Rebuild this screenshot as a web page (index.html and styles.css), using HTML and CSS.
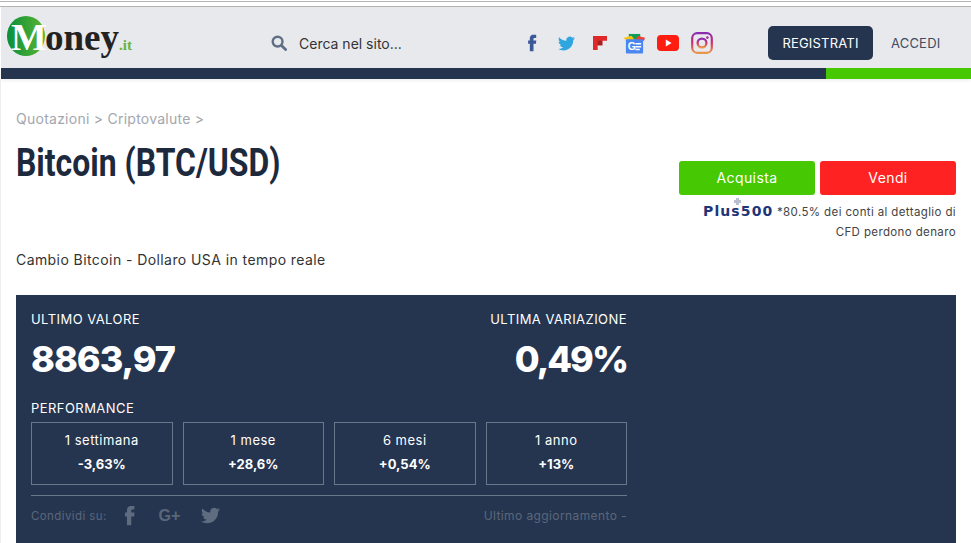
FILE: index.html
```html
<!DOCTYPE html>
<html lang="en">

<head>
    <meta charset="UTF-8">
    <title>Bitcoin (BTC/USD)</title>
    <link rel="stylesheet" href="styles.css">
</head>

<body>
    <div class="chrome"></div>
    <header class="site-header">
        <div class="logo">
            <span class="logo-circle"><span class="logo-m">M</span></span>
            <span class="logo-word">oney</span><span class="logo-tld">.it</span>
        </div>
        <div class="header-tools">
            <div class="search">
                <svg class="search-icon" viewBox="0 0 16 16" width="16" height="16">
                    <circle cx="6.6" cy="6.6" r="4.9" fill="none" stroke="#5f6f86" stroke-width="2.4"/>
                    <path d="M10.4 10.4L14.6 14.6" stroke="#5f6f86" stroke-width="2.8" stroke-linecap="round"/>
                </svg>
                <span>Cerca nel sito...</span>
            </div>
            <div class="socials">
                <div class="social"><svg viewBox="0 0 24 24" width="18" height="18"><path fill="#3b5998" d="M14 8.5V6.3c0-.9.6-1.1 1-1.1h2.6V1h-3.6C10 1 9.1 4 9.1 5.9v2.6H6.8V13h2.3v10h4.9V13h3.3l.4-4.5z"/></svg></div>
                <div class="social"><svg viewBox="0 0 24 24" width="17" height="17"><path fill="#2fa6e0" d="M23.953 4.57a10 10 0 01-2.825.775 4.958 4.958 0 002.163-2.723c-.951.555-2.005.959-3.127 1.184a4.92 4.92 0 00-8.384 4.482C7.69 8.095 4.067 6.13 1.64 3.162a4.822 4.822 0 00-.666 2.475c0 1.71.87 3.213 2.188 4.096a4.904 4.904 0 01-2.228-.616v.06a4.923 4.923 0 003.946 4.827 4.996 4.996 0 01-2.212.085 4.936 4.936 0 004.604 3.417 9.867 9.867 0 01-6.102 2.105c-.39 0-.779-.023-1.17-.067a13.995 13.995 0 007.557 2.209c9.053 0 13.998-7.496 13.998-13.985 0-.21 0-.42-.015-.63A9.935 9.935 0 0024 4.59z"/></svg></div>
                <div class="social"><svg viewBox="0 0 15 15" width="14" height="14"><path fill="#e12828" d="M0 0h15v5h-5v5H5v5H0z"/><path fill="#a51f1f" d="M5 5h5v5H5z"/></svg></div>
                <div class="social"><svg viewBox="0 0 22 22" width="21" height="21">
                    <path fill="#0c9d58" d="M5 1h12v6H5z"/>
                    <path fill="#ffc107" d="M0 5l8-2 3 4H1z"/>
                    <path fill="#ea4335" d="M14 3l8 2-1 3h-9z"/>
                    <rect fill="#4a86f0" x="2" y="6.5" width="18" height="15" rx="1"/>
                    <text class="gnews-text" x="4" y="17.5">G</text>
                    <path fill="#fff" d="M12 10.5h6v1.6h-6zM12 13.5h6v1.6h-6zM12 16.5h4.5v1.5H12z"/>
                </svg></div>
                <div class="social"><svg viewBox="0 0 22 16" width="22" height="16"><rect fill="#ff1d12" width="22" height="16" rx="4"/><path fill="#fff" d="M8.8 4.6L14.6 8l-5.8 3.4z"/></svg></div>
                <div class="social"><svg viewBox="0 0 22 22" width="22" height="22">
                    <defs>
                        <linearGradient id="insta" x1="0" y1="0" x2="0" y2="1">
                            <stop offset="0" stop-color="#8a2cb0"/>
                            <stop offset="0.5" stop-color="#d0306a"/>
                            <stop offset="1" stop-color="#e9964a"/>
                        </linearGradient>
                    </defs>
                    <rect x="1.2" y="1.2" width="19.6" height="19.6" rx="5" fill="none" stroke="url(#insta)" stroke-width="2.2"/>
                    <circle cx="11" cy="11" r="4.4" fill="none" stroke="url(#insta)" stroke-width="2.2"/>
                    <circle cx="16.4" cy="5.6" r="1.3" fill="#a82d96"/>
                </svg></div>
            </div>
            <a class="btn-register">REGISTRATI</a>
            <a class="btn-login">ACCEDI</a>
        </div>
    </header>
    <div class="color-bar">
        <div class="color-bar-blue"></div>
        <div class="color-bar-green"></div>
    </div>

    <main class="content">
        <div class="crumbs">Quotazioni &gt; Criptovalute &gt;</div>
        <div class="title-row">
            <h1>Bitcoin (BTC/USD)</h1>
            <div class="trade">
                <div class="trade-buttons">
                    <a class="btn-buy">Acquista</a>
                    <a class="btn-sell">Vendi</a>
                </div>
                <p class="trade-note"><span class="plus500">Plus500</span> *80.5% dei conti al dettaglio di<br>CFD perdono denaro</p>
            </div>
        </div>
        <p class="subtitle">Cambio Bitcoin - Dollaro USA in tempo reale</p>

        <section class="panel">
            <div class="panel-inner">
                <div class="values">
                    <div>
                        <div class="label">ULTIMO VALORE</div>
                        <div class="big">8863,97</div>
                    </div>
                    <div class="values-right">
                        <div class="label">ULTIMA VARIAZIONE</div>
                        <div class="big big-right">0,49%</div>
                    </div>
                </div>
                <div class="label perf-label">PERFORMANCE</div>
                <div class="perf-grid">
                    <div class="perf-box"><span>1 settimana</span><b>-3,63%</b></div>
                    <div class="perf-box"><span>1 mese</span><b>+28,6%</b></div>
                    <div class="perf-box"><span>6 mesi</span><b>+0,54%</b></div>
                    <div class="perf-box"><span>1 anno</span><b>+13%</b></div>
                </div>
                <div class="share">
                    <span class="share-label">Condividi su:</span>
                    <svg class="share-fb" viewBox="0 0 24 24" width="21" height="21"><path fill="#5f6c80" d="M14 8.5V6.3c0-.9.6-1.1 1-1.1h2.6V1h-3.6C10 1 9.1 4 9.1 5.9v2.6H6.8V13h2.3v10h4.9V13h3.3l.4-4.5z"/></svg>
                    <span class="share-gplus">G+</span>
                    <svg class="share-tw" viewBox="0 0 24 24" width="19" height="19"><path fill="#5f6c80" d="M23.953 4.57a10 10 0 01-2.825.775 4.958 4.958 0 002.163-2.723c-.951.555-2.005.959-3.127 1.184a4.92 4.92 0 00-8.384 4.482C7.69 8.095 4.067 6.13 1.64 3.162a4.822 4.822 0 00-.666 2.475c0 1.71.87 3.213 2.188 4.096a4.904 4.904 0 01-2.228-.616v.06a4.923 4.923 0 003.946 4.827 4.996 4.996 0 01-2.212.085 4.936 4.936 0 004.604 3.417 9.867 9.867 0 01-6.102 2.105c-.39 0-.779-.023-1.17-.067a13.995 13.995 0 007.557 2.209c9.053 0 13.998-7.496 13.998-13.985 0-.21 0-.42-.015-.63A9.935 9.935 0 0024 4.59z"/></svg>
                    <span class="share-updated">Ultimo aggiornamento -</span>
                </div>
            </div>
        </section>
    </main>
</body>

</html>
```

FILE: styles.css
```css
html,
body {
    margin: 0;
    height: 543px;
    overflow: hidden;
}

body {
    background: #fff;
    font-family: "Inter", "Liberation Sans", sans-serif;
    color: #2f3b4d;
}

p,
h1 {
    margin: 0;
}

.chrome {
    height: 4px;
    margin-top: 1px;
    border-top: 1px solid #b3b3b3;
    border-bottom: 1px solid #b3b3b3;
}

.site-header {
    display: flex;
    align-items: center;
    height: 61px;
    margin-left: 1px;
    background: #e8e9ed;
}

.logo {
    display: flex;
    align-items: baseline;
    width: 264px;
    margin-left: 6px;
    font-family: "Liberation Serif", serif;
    font-weight: bold;
}

.logo-circle {
    width: 38px;
    height: 40px;
    border-radius: 50%;
    background: linear-gradient(90deg, #0a8f3a, #5cb531);
    text-align: center;
}

.logo-m {
    font-size: 38px;
    line-height: 42px;
    color: #fff;
    margin-left: 4px;
}

.logo-word {
    font-size: 37px;
    color: #222;
}

.logo-tld {
    font-size: 15px;
    color: #65b53c;
}

.header-tools {
    display: flex;
    align-items: center;
    margin-top: 11px;
}

.search {
    display: flex;
    align-items: center;
    gap: 12px;
    width: 244px;
    font-size: 14px;
    color: #333;
}

.socials {
    display: flex;
    align-items: center;
}

.social {
    display: flex;
    align-items: center;
    justify-content: center;
    width: 34px;
}

.btn-register {
    width: 105px;
    margin-left: 49px;
    line-height: 34px;
    text-align: center;
    background: #25354f;
    color: #fff;
    border-radius: 5px;
    font-size: 13px;
    letter-spacing: 0.2px;
}

.btn-login {
    margin-left: 18px;
    font-size: 13px;
    letter-spacing: 0.2px;
    color: #3f4c62;
}

.gnews-text {
    font-family: "Liberation Sans", sans-serif;
    font-weight: bold;
    font-size: 11px;
    fill: #fff;
}

.color-bar {
    display: flex;
    height: 11px;
    margin-left: 1px;
    box-shadow: 0 2px 3px rgba(0, 0, 0, 0.06);
}

.color-bar-blue {
    width: 825px;
    background: #25354f;
}

.color-bar-green {
    flex: 1;
    background: #46c802;
}

.content {
    padding: 31px 15px 0 15px;
    border-left: 1px solid #eee;
}

.crumbs {
    font-size: 14px;
    line-height: 18px;
    letter-spacing: 0.25px;
    color: #a3a7ae;
}

.title-row {
    display: flex;
    justify-content: space-between;
    align-items: flex-start;
    margin-top: 13px;
}

h1 {
    font-family: "Roboto", sans-serif;
    font-size: 38px;
    line-height: 44px;
    font-weight: bold;
    color: #1d2a3d;
    white-space: nowrap;
    transform: scaleX(0.84);
    transform-origin: left center;
}

.trade {
    width: 277px;
    margin-top: 20px;
}

.trade-buttons {
    display: flex;
    gap: 5px;
}

.btn-buy,
.btn-sell {
    flex: 1;
    line-height: 34px;
    text-align: center;
    color: #fff;
    border-radius: 3px;
    font-size: 14px;
    letter-spacing: 0.4px;
}

.btn-buy {
    background: #46c802;
}

.btn-sell {
    background: #ff2222;
}

.trade-note {
    margin-top: 6px;
    text-align: right;
    font-size: 11.5px;
    line-height: 20px;
    letter-spacing: 0.38px;
    color: #444;
}

.plus500 {
    position: relative;
    font-family: "DejaVu Sans", sans-serif;
    font-weight: bold;
    font-size: 14px;
    letter-spacing: 1.1px;
    color: #1f3578;
}

/* small cross above the logo */
.plus500::before {
    content: "";
    position: absolute;
    left: 31px;
    top: -5px;
    width: 7px;
    height: 7px;
    background:
        linear-gradient(#b8bfcf, #b8bfcf) center / 3px 7px no-repeat,
        linear-gradient(#b8bfcf, #b8bfcf) center / 7px 3px no-repeat;
}

.subtitle {
    margin-top: 9px;
    font-size: 14px;
    line-height: 18px;
    letter-spacing: 0.42px;
    color: #333;
}

.panel {
    margin-top: 26px;
    height: 248px;
    padding: 15px;
    box-sizing: border-box;
    background: #25354f;
    color: #fff;
    overflow: hidden;
}

.panel-inner {
    width: 596px;
}

.values {
    display: flex;
    justify-content: space-between;
}

.values-right {
    text-align: right;
}

.label {
    font-size: 13px;
    line-height: 18px;
    letter-spacing: 0.45px;
}

.big {
    margin-top: 8px;
    font-size: 36px;
    line-height: 46px;
    font-weight: 800;
    letter-spacing: -1px;
}

.big-right {
    letter-spacing: -2px;
}

.perf-label {
    margin-top: 17px;
}

.perf-grid {
    display: grid;
    grid-template-columns: repeat(4, 1fr);
    gap: 10px;
    margin-top: 5px;
}

.perf-box {
    display: flex;
    flex-direction: column;
    align-items: center;
    height: 63px;
    box-sizing: border-box;
    padding-top: 8px;
    border: 1px solid #6a778b;
    font-size: 13px;
    line-height: 18px;
    letter-spacing: 0.5px;
}

.perf-box b {
    margin-top: 6px;
    letter-spacing: 0;
}

.share {
    display: flex;
    align-items: center;
    margin-top: 10px;
    padding-top: 9px;
    border-top: 1px solid #6a778b;
    color: #5a677b;
    font-size: 11.5px;
    letter-spacing: 0.4px;
}

.share-fb {
    margin-left: 12px;
}

.share-gplus {
    margin-left: 19px;
    font-family: "Liberation Sans", sans-serif;
    font-weight: bold;
    font-size: 16px;
    letter-spacing: 0;
}

.share-tw {
    margin-left: 21px;
}

.share-updated {
    margin-left: auto;
    font-size: 12px;
}
```
